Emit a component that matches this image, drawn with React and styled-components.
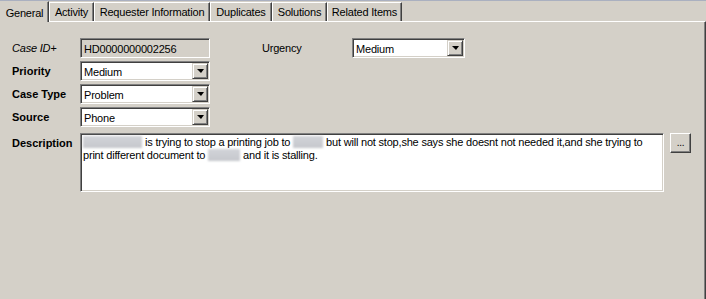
import React from 'react'
import styled, { createGlobalStyle } from 'styled-components'

const GlobalStyle = createGlobalStyle`
    html, body {
        margin: 0;
        padding: 0;
        background: #d4d0c8;
    }
    body {
        font-family: "Liberation Sans", Arial, sans-serif;
        font-size: 11px;
        color: #000000;
    }
`

const Window = styled.div`
    width: 706px;
    height: 299px;
    background: #d4d0c8;
    display: flex;
    flex-direction: column;
    overflow: hidden;
    letter-spacing: -0.2px;
`

const TabStrip = styled.div`
    display: flex;
    align-items: flex-end;
    height: 20px;
    border-top: 1px solid #aab0c0;
    position: relative;
    z-index: 1;
`

const Tab = styled.div`
    box-sizing: border-box;
    width: ${(p) => p.$width}px;
    height: ${(p) => (p.$active ? 21 : 19)}px;
    margin-bottom: ${(p) => (p.$active ? -1 : 0)}px;
    background: #d4d0c8;
    border-top: 1px solid ${(p) => (p.$active ? '#d4d0c8' : '#ffffff')};
    border-left: 1px solid ${(p) => (p.$active ? '#d4d0c8' : '#ffffff')};
    border-right: 1px solid #404040;
    box-shadow: inset -1px 0 #808080;
    display: flex;
    align-items: center;
    justify-content: center;
    padding-top: ${(p) => (p.$active ? 2 : 0)}px;
    white-space: nowrap;
`

const Panel = styled.div`
    flex: 1;
    border-top: 1px solid #ffffff;
    border-right: 1px solid #404040;
    box-shadow: inset -1px 0 #808080;
    padding: 16px 0 0 12px;
    display: flex;
    flex-direction: column;
    gap: 3px;
`

const Row = styled.div`
    display: flex;
    align-items: ${(p) => (p.$top ? 'flex-start' : 'center')};
    height: ${(p) => p.$height || 20}px;
    margin-top: ${(p) => p.$gap || 0}px;
`

const Label = styled.div`
    width: ${(p) => p.$width || 68}px;
    margin-left: ${(p) => p.$offset || 0}px;
    font-weight: ${(p) => (p.$bold ? 700 : 400)};
    font-style: ${(p) => (p.$italic ? 'italic' : 'normal')};
    letter-spacing: ${(p) => (p.$bold ? '0' : '-0.2px')};
    padding-top: ${(p) => p.$padTop || 0}px;
    white-space: nowrap;
`

const Sunken = styled.div`
    box-sizing: border-box;
    width: ${(p) => p.$width}px;
    height: ${(p) => p.$height || 20}px;
    background: ${(p) => (p.$readOnly ? '#d4d0c8' : '#ffffff')};
    border: 1px solid;
    border-color: #808080 #ffffff #ffffff #808080;
    box-shadow: inset 1px 1px #404040, inset -1px -1px #d4d0c8;
    display: flex;
    align-items: center;
    padding: 1px 1px 1px 2px;
`

const FieldText = styled.span`
    flex: 1;
    padding-left: 1px;
    padding-top: 1px;
    white-space: nowrap;
`

const DropButton = styled.div`
    box-sizing: border-box;
    width: 16px;
    height: 16px;
    background: #d4d0c8;
    border: 1px solid;
    border-color: #d4d0c8 #404040 #404040 #d4d0c8;
    box-shadow: inset 1px 1px #ffffff, inset -1px -1px #808080;
    display: flex;
    align-items: center;
    justify-content: center;
`

const Arrow = styled.div`
    width: 0;
    height: 0;
    border-left: 4px solid transparent;
    border-right: 3px solid transparent;
    border-top: 4px solid #000000;
    margin-left: 1px;
`

const Memo = styled(Sunken)`
    display: block;
    padding: 2px 2px 1px;
    line-height: 13px;
    white-space: nowrap;
`

const Hidden = styled.span`
    display: inline-block;
    width: ${(p) => p.$width}px;
    height: 12px;
    vertical-align: -2px;
    background: linear-gradient(180deg, #d2d3d8 0%, #c6c8cd 100%);
    filter: blur(0.8px);
    margin-right: 3px;
`

const MoreButton = styled.div`
    box-sizing: border-box;
    width: 21px;
    height: 20px;
    margin-left: 6px;
    background: #d4d0c8;
    border: 1px solid;
    border-color: #ffffff #404040 #404040 #ffffff;
    box-shadow: inset -1px -1px #808080;
    display: flex;
    align-items: center;
    justify-content: center;
    padding-bottom: 2px;
    font-size: 10px;
`

const tabs = [
    { label: 'General', width: 49, active: true },
    { label: 'Activity', width: 45 },
    { label: 'Requester Information', width: 116 },
    { label: 'Duplicates', width: 62 },
    { label: 'Solutions', width: 55 },
    { label: 'Related Items', width: 75 },
]

const Select = ({ width, value }) => (
    <Sunken $width={width}>
        <FieldText>{value}</FieldText>
        <DropButton>
            <Arrow />
        </DropButton>
    </Sunken>
)

const App = () => {
    return (
        <Window>
            <GlobalStyle />
            <TabStrip>
                {tabs.map((t) => (
                    <Tab key={t.label} $width={t.width} $active={t.active}>
                        {t.label}
                    </Tab>
                ))}
            </TabStrip>
            <Panel>
                <Row>
                    <Label $italic>Case ID+</Label>
                    <Sunken $width={130} $readOnly>
                        <FieldText>HD0000000002256</FieldText>
                    </Sunken>
                    <Label $offset={52} $width={90}>Urgency</Label>
                    <Select width={113} value="Medium" />
                </Row>
                <Row>
                    <Label $bold>Priority</Label>
                    <Select width={130} value="Medium" />
                </Row>
                <Row>
                    <Label $bold>Case Type</Label>
                    <Select width={130} value="Problem" />
                </Row>
                <Row>
                    <Label $bold>Source</Label>
                    <Select width={130} value="Phone" />
                </Row>
                <Row $top $height={59} $gap={3}>
                    <Label $bold $padTop={4}>Description</Label>
                    <Memo $width={584} $height={59}>
                        <Hidden $width={59} />
                        is trying to stop a printing job to <Hidden $width={30} />
                        but will not stop,she says she doesnt not needed it,and she trying to
                        <br />
                        print different document to <Hidden $width={32} />
                        and it is stalling.
                    </Memo>
                    <MoreButton>...</MoreButton>
                </Row>
            </Panel>
        </Window>
    )
}

export default App
